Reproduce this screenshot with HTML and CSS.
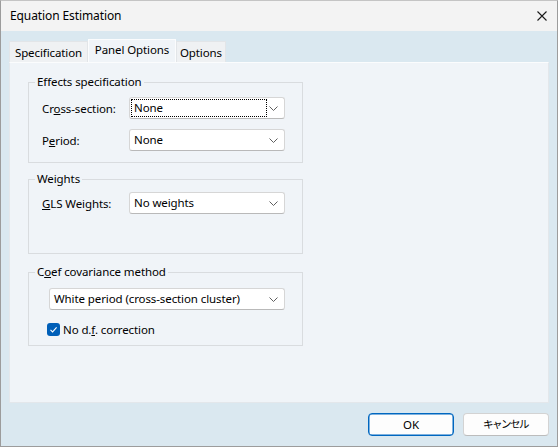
FILE: index.html
```html
<!DOCTYPE html>
<html>
<head>
<meta charset="utf-8">
<title>Equation Estimation</title>
<link rel="stylesheet" href="styles.css">
</head>
<body>
<div class="window">
	<div class="titlebar">
		<span class="title">Equation Estimation</span>
		<svg class="close" width="10" height="10" viewBox="0 0 10 10"><path d="M0.5 0.5L9.5 9.5M9.5 0.5L0.5 9.5" stroke="#1a1a1a" stroke-width="1.1" fill="none"/></svg>
	</div>
	<div class="content">
		<div class="tabs">
			<div class="tab tab-spec">Specification</div>
			<div class="tab tab-panel active">Panel Options</div>
			<div class="tab tab-opts">Options</div>
		</div>
		<div class="panel">
			<fieldset class="group group-effects">
				<legend>Effects specification</legend>
				<div class="row">
					<label>Cr<u>o</u>ss-section:</label>
					<div class="select"><span class="value focus">None</span><svg class="chev" width="9" height="5" viewBox="0 0 9 5"><path d="M0.5 0.5L4.5 4.5L8.5 0.5" stroke="#5f5f5f" fill="none"/></svg></div>
				</div>
				<div class="row">
					<label>P<u>e</u>riod:</label>
					<div class="select"><span class="value">None</span><svg class="chev" width="9" height="5" viewBox="0 0 9 5"><path d="M0.5 0.5L4.5 4.5L8.5 0.5" stroke="#5f5f5f" fill="none"/></svg></div>
				</div>
			</fieldset>
			<fieldset class="group group-weights">
				<legend>Weights</legend>
				<div class="row">
					<label><u>G</u>LS Weights:</label>
					<div class="select"><span class="value">No weights</span><svg class="chev" width="9" height="5" viewBox="0 0 9 5"><path d="M0.5 0.5L4.5 4.5L8.5 0.5" stroke="#5f5f5f" fill="none"/></svg></div>
				</div>
			</fieldset>
			<fieldset class="group group-coef">
				<legend>C<u>o</u>ef covariance method</legend>
				<div class="select wide"><span class="value">White period (cross-section cluster)</span><svg class="chev" width="9" height="5" viewBox="0 0 9 5"><path d="M0.5 0.5L4.5 4.5L8.5 0.5" stroke="#5f5f5f" fill="none"/></svg></div>
				<div class="check">
					<span class="box"><svg width="13" height="13" viewBox="0 0 13 13"><path d="M3.5 6.8L5.6 8.9L9.6 4.4" stroke="#fff" stroke-width="1.1" fill="none"/></svg></span>
					<span>No d.<u>f</u>. correction</span>
				</div>
			</fieldset>
		</div>
		<div class="footer">
			<div class="btn default">OK</div>
			<div class="btn jp">キャンセル</div>
		</div>
	</div>
</div>
</body>
</html>
```

FILE: styles.css
```css
*{ box-sizing:border-box;}
body{ margin:0; font-family:"Noto Sans","Noto Sans CJK JP",sans-serif; font-size:11.5px; letter-spacing:-0.1px; color:#000;}
.window{ width:558px; height:447px; border:1px solid #9c9c9c; border-top-color:#c4c4c4; background:#dae8f0; display:flex; flex-direction:column;}
.titlebar{ height:30px; background:#f3f3f3; display:flex; align-items:center; justify-content:space-between; padding:0 10px 0 9px;}
.title{ font-size:12px; line-height:16px; margin-top:-1px;}
.close{ display:block;}
.content{ flex:1; display:flex; flex-direction:column; padding:8px 8px 10px 8px;}
.tabs{ display:flex; align-items:flex-end; height:23px;}
.tab{ height:21px; line-height:21px; text-align:center; background:#eff1f3; border:1px solid #e2e5e8; border-bottom:none;}
.tab-spec{ width:79px;}
.tab-panel{ width:88px;}
.tab-opts{ width:50px;}
.tab.active{ height:23px; line-height:19px; background:#f0f4f8; border-color:#fbfcfd;}
.panel{ flex:1; background:#f0f4f8; border:1px solid #e3e7eb; border-top-color:#fbfcfd; padding:0 18px;}
.group{ margin:0; width:275px; border:1px solid #d9dcdf; padding:0 16px 0 13px;}
.group legend{ margin-left:-7px; padding:0 2px; line-height:16px;}
.group-effects{ margin-top:11px; height:89px; padding-top:7px;}
.group-weights{ margin-top:8px; height:83px; padding-top:5px;}
.group-coef{ margin-top:10px; height:82px; padding-top:8px;}
.row{ display:flex; align-items:center; height:22px; margin-bottom:10px;}
.row label{ width:87px;}
.select{ width:156px; height:22px; background:#fff; border:1px solid #d6d6d6; border-bottom-color:#b9b9b9; border-radius:3px; display:flex; align-items:center; justify-content:space-between; padding:0 6px 0 2px;}
.select.wide{ width:236px; margin-left:7px;}
.value{ padding:0 2px; line-height:16px; height:16px;}
.value.focus{ width:134px; outline:1px dotted #000; outline-offset:0;}
.chev{ display:block;}
.check{ display:flex; align-items:center; margin-top:12px; margin-left:5px; height:15px;}
.box{ width:13px; height:13px; border-radius:3px; background:#005fb8; margin-right:3px;}
.box svg{ display:block;}
.footer{ display:flex; justify-content:flex-end; margin-top:10px; padding-right:0;}
.btn{ width:86px; height:23px; line-height:21px; text-align:center; background:#fdfdfd; border:1px solid #d3d3d3; border-bottom-color:#bcbcbc; border-radius:4px; margin-left:9px;}
.btn.default{ border:1px solid #0067c0; box-shadow:inset 0 0 0 0.5px #0067c0;}
.btn.jp{ font-size:10.5px; letter-spacing:-1.5px; text-indent:-1px;}
```
